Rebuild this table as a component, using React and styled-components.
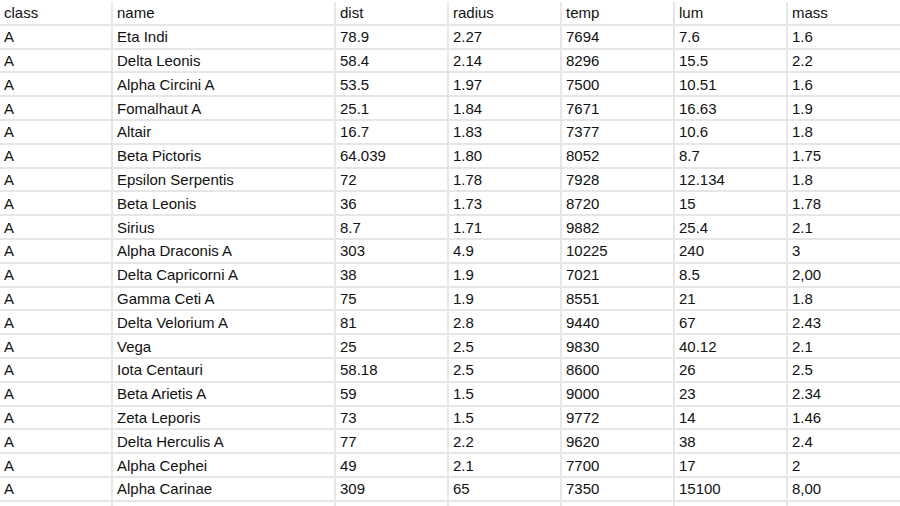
import React from 'react';
import styled, { createGlobalStyle } from "styled-components";

const GlobalStyle = createGlobalStyle`
  html, body {
    margin: 0;
    padding: 0;
    background: #ffffff;
    overflow: hidden;
  }
`;

const columns = ["class", "name", "dist", "radius", "temp", "lum", "mass"];

const stars = [
  ["A", "Eta Indi", "78.9", "2.27", "7694", "7.6", "1.6"],
  ["A", "Delta Leonis", "58.4", "2.14", "8296", "15.5", "2.2"],
  ["A", "Alpha Circini A", "53.5", "1.97", "7500", "10.51", "1.6"],
  ["A", "Fomalhaut A", "25.1", "1.84", "7671", "16.63", "1.9"],
  ["A", "Altair", "16.7", "1.83", "7377", "10.6", "1.8"],
  ["A", "Beta Pictoris", "64.039", "1.80", "8052", "8.7", "1.75"],
  ["A", "Epsilon Serpentis", "72", "1.78", "7928", "12.134", "1.8"],
  ["A", "Beta Leonis", "36", "1.73", "8720", "15", "1.78"],
  ["A", "Sirius", "8.7", "1.71", "9882", "25.4", "2.1"],
  ["A", "Alpha Draconis A", "303", "4.9", "10225", "240", "3"],
  ["A", "Delta Capricorni A", "38", "1.9", "7021", "8.5", "2,00"],
  ["A", "Gamma Ceti A", "75", "1.9", "8551", "21", "1.8"],
  ["A", "Delta Velorium A", "81", "2.8", "9440", "67", "2.43"],
  ["A", "Vega", "25", "2.5", "9830", "40.12", "2.1"],
  ["A", "Iota Centauri", "58.18", "2.5", "8600", "26", "2.5"],
  ["A", "Beta Arietis A", "59", "1.5", "9000", "23", "2.34"],
  ["A", "Zeta Leporis", "73", "1.5", "9772", "14", "1.46"],
  ["A", "Delta Herculis A", "77", "2.2", "9620", "38", "2.4"],
  ["A", "Alpha Cephei", "49", "2.1", "7700", "17", "2"],
  ["A", "Alpha Carinae", "309", "65", "7350", "15100", "8,00"],
  ["", "", "", "", "", "", ""],
];

export default function App() {
  return (
    <>
      <GlobalStyle />
      <Sheet>
        <Row>
          {columns.map((c) => (
            <Cell key={c}>{c}</Cell>
          ))}
        </Row>
        {stars.map((star, index) => (
          <Row key={index}>
            {star.map((value, i) => (
              <Cell key={i}>{value}</Cell>
            ))}
          </Row>
        ))}
      </Sheet>
    </>
  );
}

const Sheet = styled.div`
  width: 900px;
  height: 506px;
  padding-top: 2px;
  box-sizing: border-box;
  overflow: hidden;
  font-family: "Liberation Sans", Arial, sans-serif;
  font-size: 15px;
  color: #111111;
`;

const Row = styled.div`
  display: grid;
  grid-template-columns: 113px 223px 113px 113px 113px 113px 112px;
  height: 23.8px;
  box-sizing: border-box;
  border-bottom: 2px solid #e6e6e6;
`;

const Cell = styled.div`
  display: flex;
  align-items: center;
  padding-left: 4px;
  box-sizing: border-box;
  border-right: 2px solid #e6e6e6;
  white-space: nowrap;
  overflow: hidden;
  &:last-child {
    border-right: none;
  }
`;
